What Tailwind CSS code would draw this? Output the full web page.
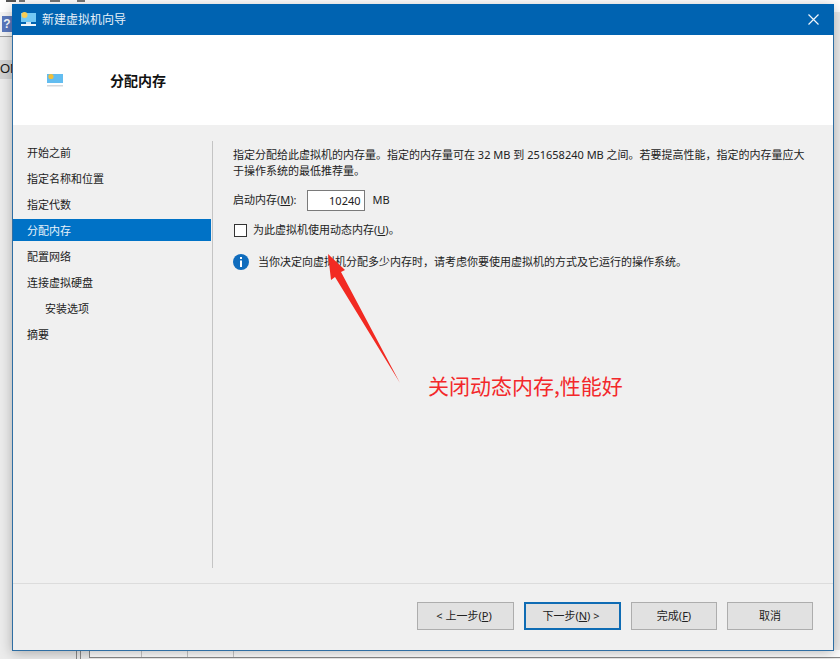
<!DOCTYPE html>
<html><head><meta charset="utf-8">
<script src="https://cdn.jsdelivr.net/npm/@tailwindcss/browser@4"></script>
</head>
<body class="m-0 w-[840px] h-[659px] overflow-hidden relative bg-[#ececec] font-['Noto_Sans','Noto_Sans_CJK_SC',sans-serif] text-[11px] text-[#1a1a1a]">
<!-- background app -->
<div class="absolute left-0 top-0 w-full h-[12px] bg-white flex items-start gap-[3px] pl-[6px]">
  <span class="w-[10px] h-[2px] bg-[#555]"></span><span class="w-[6px] h-[2px] bg-[#777]"></span><span class="ml-[22px] w-[10px] h-[2px] bg-[#777]"></span><span class="ml-[14px] w-[8px] h-[2px] bg-[#777]"></span>
</div>
<div class="absolute left-0 top-[12px] w-[12px] h-[25px] flex items-center bg-[#f4f4f4] border-b border-[#a0a0a0]"><div class="ml-[2px] w-[10px] h-[16px] bg-[#5a78bd] text-white text-[12px] leading-[16px] text-center font-bold font-['Liberation_Sans']">?</div></div>
<div class="absolute left-0 top-[60px] w-[12px] h-[19px] bg-[#d4d4d4] text-[13px] leading-[18px] font-['Liberation_Sans'] overflow-hidden whitespace-nowrap">ON</div>
<div class="absolute left-[76px] top-[650px] w-[5px] h-[9px] border-x border-[#8a8a8a]"></div>
<div class="absolute left-[89px] top-[650px] w-[751px] h-[8px] border-l border-b border-[#8a8a8a] bg-white flex"><div class="w-[52px] border-r border-[#c8c8c8]"></div><div class="w-[46px] border-r border-[#c8c8c8]"></div><div class="w-[46px] border-r border-[#c8c8c8]"></div></div>

<!-- wizard window -->
<div class="absolute left-[12px] top-[4px] w-[822px] h-[647px] flex flex-col border-x border-b border-[#2f6ea3] bg-[#f0f0f0] shadow-[0_2px_12px_rgba(0,0,0,0.28)]">
  <div class="h-[31px] shrink-0 bg-[#0063b1] flex items-center text-white -mx-px">
    <svg class="ml-[8px]" width="17" height="17" viewBox="0 0 17 17"><rect x="1" y="2" width="15" height="9" fill="#72c8f4"/><circle cx="4.5" cy="4" r="3" fill="#f6cc55"/><rect x="6" y="11" width="5" height="2" fill="#cfe3f1"/><rect x="1" y="13" width="15" height="2" fill="#f0f6fa"/></svg>
    <span class="ml-[5px] text-[12px] leading-[16px] text-[#e6f0f8]">新建虚拟机向导</span>
    <svg class="ml-auto mr-[15px]" width="11" height="11" viewBox="0 0 11 11"><path d="M0.5 0.5L10.5 10.5M10.5 0.5L0.5 10.5" stroke="#f2f7fb" stroke-width="1.2" fill="none"/></svg>
  </div>
  <div class="h-[90px] shrink-0 bg-white flex items-start">
    <svg class="ml-[34px] mt-[38px]" width="16" height="16" viewBox="0 0 16 16"><rect x="0" y="1" width="16" height="9" fill="#63bdf0"/><circle cx="4" cy="3.5" r="2.6" fill="#f2bf3a"/><rect x="0" y="12" width="16" height="1.5" fill="#d4d8dc"/></svg>
    <h1 class="ml-[47px] mt-[36px] text-[14px] leading-[20px] font-bold text-[#111]">分配内存</h1>
  </div>
  <div class="flex-1 flex min-h-0">
    <nav class="w-[199px] shrink-0 pt-[14px] pr-px text-[11px] text-[#222]">
      <div class="h-[26px] leading-[28px] pl-[14px]">开始之前</div>
      <div class="h-[26px] leading-[28px] pl-[14px]">指定名称和位置</div>
      <div class="h-[26px] leading-[28px] pl-[14px]">指定代数</div>
      <div class="h-[22px] leading-[24px] my-[2px] pl-[14px] bg-[#0072c6] text-[#e8f3fb]">分配内存</div>
      <div class="h-[26px] leading-[28px] pl-[14px]">配置网络</div>
      <div class="h-[26px] leading-[28px] pl-[14px]">连接虚拟硬盘</div>
      <div class="h-[26px] leading-[28px] pl-[32px]">安装选项</div>
      <div class="h-[26px] leading-[28px] pl-[14px]">摘要</div>
    </nav>
    <div class="w-px h-[427px] mt-[16px] bg-[#c4c4c4] shrink-0"></div>
    <main class="flex-1 pl-[20px] pr-[16px] pt-[22px] text-[#222]">
      <p class="text-[11px] leading-[16px] w-[580px]">指定分配给此虚拟机的内存量。指定的内存量可在 32 MB 到 251658240 MB 之间。若要提高性能，指定的内存量应大于操作系统的最低推荐量。</p>
      <div class="flex items-center mt-[10px] h-[23px]">
        <span>启动内存(<u>M</u>):</span>
        <input class="ml-[10px] w-[58px] h-[21px] border border-[#7a7a7a] bg-white text-right pr-[3px] text-[11px] outline-none" value="10240">
        <span class="ml-[8px]">MB</span>
      </div>
      <label class="flex items-center mt-[9px] h-[18px]">
        <span class="ml-[1px] w-[13px] h-[13px] border border-[#333] bg-white"></span>
        <span class="ml-[6px]">为此虚拟机使用动态内存(<u>U</u>)。</span>
      </label>
      <div class="flex items-center mt-[14px] h-[18px]">
        <svg width="16" height="16" viewBox="0 0 16 16"><circle cx="8" cy="8" r="8" fill="#0f6cbd"/><rect x="7" y="3" width="2" height="2" fill="#fff"/><rect x="7" y="6.5" width="2" height="6.5" fill="#fff"/></svg>
        <span class="ml-[9px]">当你决定向虚拟机分配多少内存时，请考虑你要使用虚拟机的方式及它运行的操作系统。</span>
      </div>
    </main>
  </div>
  <footer class="h-[67px] shrink-0 border-t border-[#dcdcdc] flex items-start pt-[18px] pr-[20px] justify-end text-[11px] text-[#222]">
    <button class="w-[97px] h-[28px] pt-px pr-[3px] bg-[#e1e1e1] border border-[#adadad]">&lt; 上一步(<u>P</u>)</button>
    <button class="ml-[10px] w-[97px] h-[28px] pt-px pr-[3px] bg-[#e1e1e1] border-2 border-[#0f6cb4]">下一步(<u>N</u>) &gt;</button>
    <button class="ml-[10px] w-[86px] h-[28px] pt-px bg-[#e1e1e1] border border-[#adadad]">完成(<u>F</u>)</button>
    <button class="ml-[10px] w-[86px] h-[28px] pt-px bg-[#e1e1e1] border border-[#adadad]">取消</button>
  </footer>
</div>

<!-- annotation -->
<svg class="absolute left-0 top-0 pointer-events-none" width="840" height="659"><polygon points="328,254 345,270 341,272 400,383 335,277 331,280" fill="#f22a22"/></svg>
<div class="absolute left-[428px] top-[371px] text-[21px] leading-[29px] text-[#f3282b] font-['Noto_Sans_CJK_SC']">关闭动态内存,性能好</div>
</body></html>
